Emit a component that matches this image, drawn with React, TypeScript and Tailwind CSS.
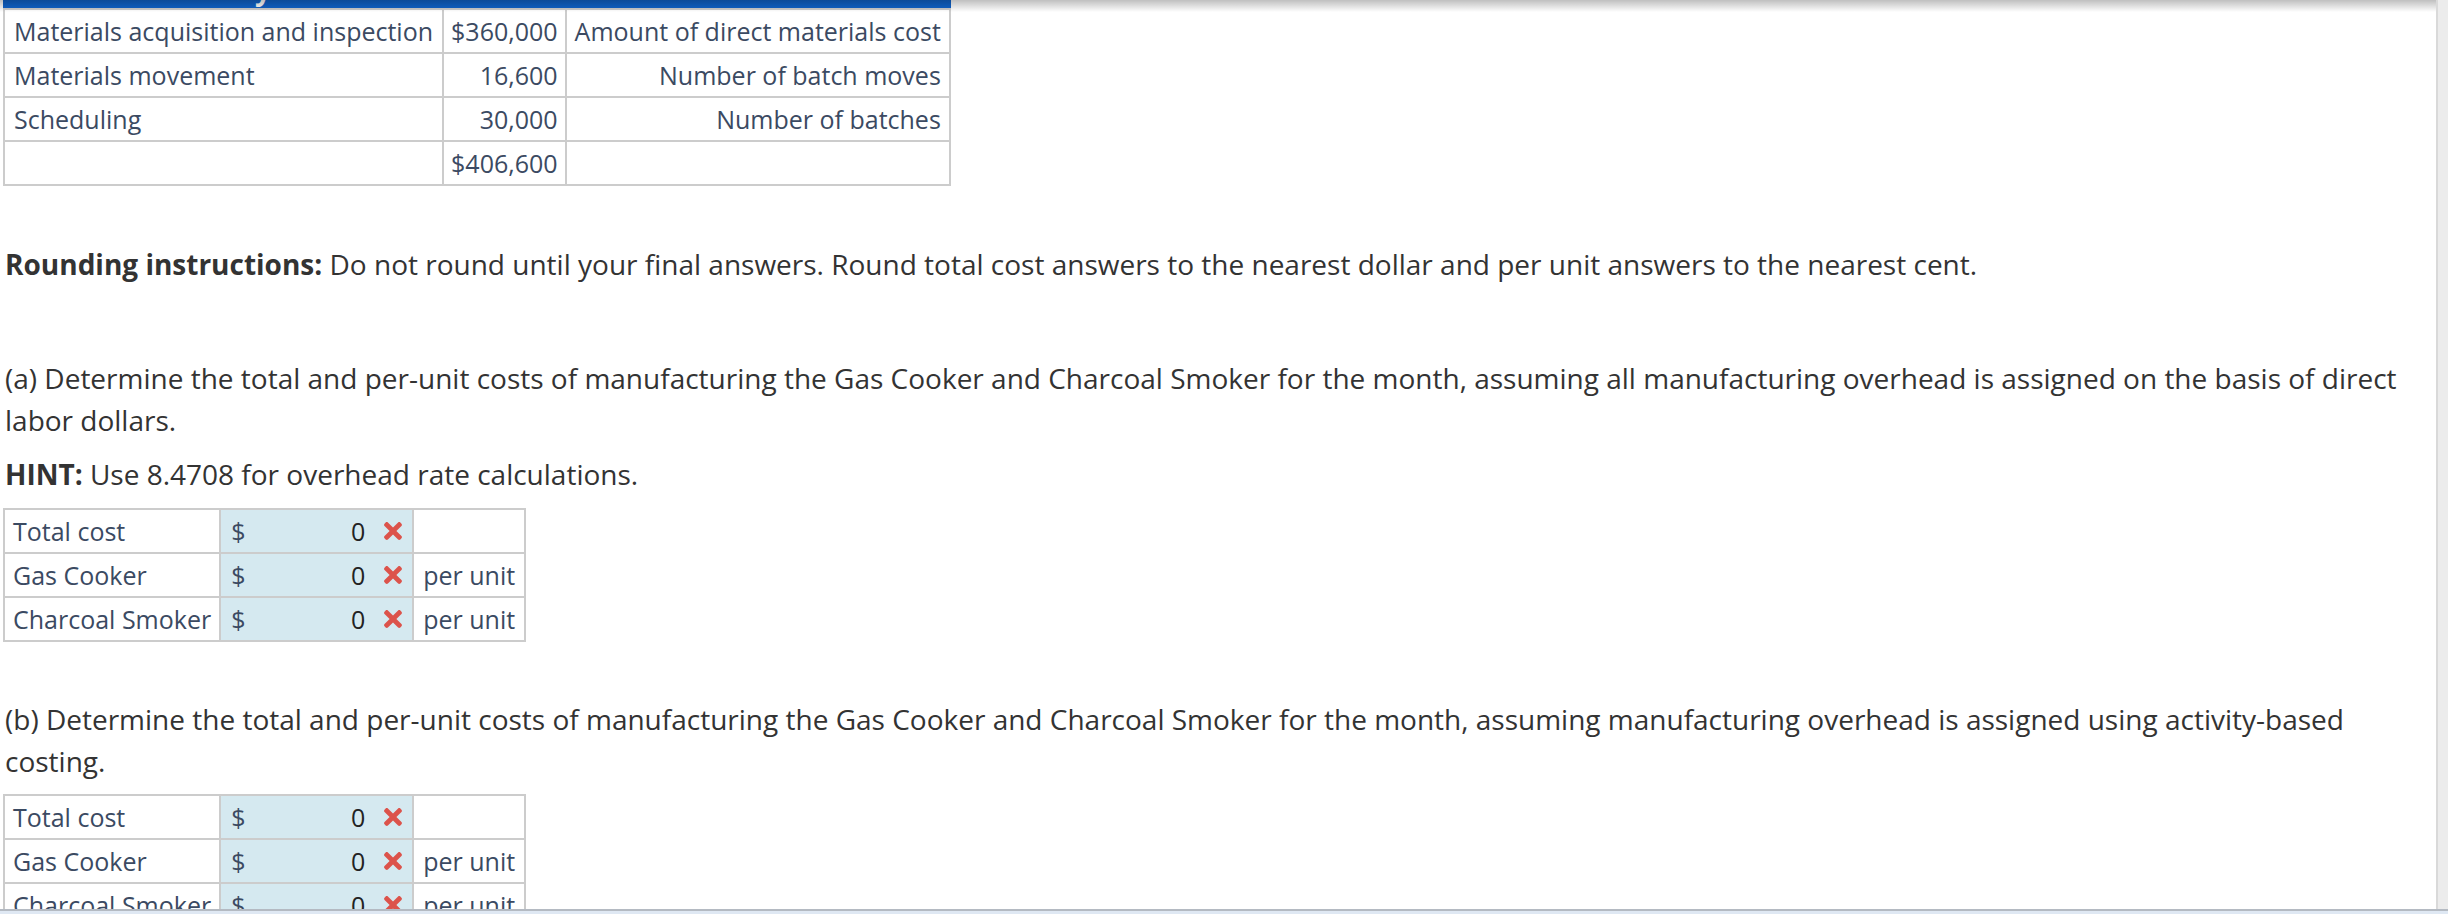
import { FaTimes } from 'react-icons/fa'

interface CostRow {
  label: string
  amount: string
  driver: string
}

const activityRows: CostRow[] = [
  { label: 'Materials acquisition and inspection', amount: '$360,000', driver: 'Amount of direct materials cost' },
  { label: 'Materials movement', amount: '16,600', driver: 'Number of batch moves' },
  { label: 'Scheduling', amount: '30,000', driver: 'Number of batches' },
  { label: '', amount: '$406,600', driver: '' },
]

const answerRows = [
  { label: 'Total cost', unit: '' },
  { label: 'Gas Cooker', unit: 'per unit' },
  { label: 'Charcoal Smoker', unit: 'per unit' },
]

const cell = 'border-2 border-[#cccccc] leading-[42px] whitespace-nowrap'

const AnswerTable = () => (
  <table className="border-collapse text-[25px] text-[#3b4a62]">
    <tbody>
      {answerRows.map((row) => (
        <tr key={row.label}>
          <td className={`${cell} px-[8px]`}>{row.label}</td>
          <td className="w-[193px] border-2 border-[#cccccc] bg-[#d5e9f0] pl-[10px] pr-[6px] leading-[42px]">
            <div className="flex items-center">
              <span>$</span>
              <span className="flex-1 text-right text-[#222222]">0</span>
              <FaTimes size={26} className="ml-[15px] shrink-0 text-[#dc534b]" />
            </div>
          </td>
          <td className={`${cell} w-[112px] px-[9px]`}>{row.unit}</td>
        </tr>
      ))}
    </tbody>
  </table>
)

export default function App() {
  return (
    <div
      className="relative flex h-[914px] w-full flex-col overflow-hidden bg-white"
      style={{ fontFamily: '"Open Sans", "Noto Sans", sans-serif' }}
    >
      <div className="flex min-h-0 flex-1">
        <main className="min-w-0 flex-1 pl-[3px]">
          {/* activity cost pool table, header scrolled out of view */}
          <div className="w-fit">
            <div className="relative h-[8px] overflow-hidden bg-[#0f63cb]">
              <span className="absolute left-[252px] top-[-25px] text-[28px] font-bold leading-none text-white">y</span>
            </div>
            <table className="border-collapse text-[25px] text-[#3b4a62]">
              <tbody>
                {activityRows.map((row, i) => (
                  <tr key={i}>
                    <td className={`${cell} px-[9px]`}>{row.label}</td>
                    <td className={`${cell} px-[7px] text-right`}>{row.amount}</td>
                    <td className={`${cell} px-[8px] text-right`}>{row.driver}</td>
                  </tr>
                ))}
              </tbody>
            </table>
          </div>

          <div className="pl-[2px] pr-[8px] text-[28px] leading-[42px] text-[#333333]">
            <p className="mt-[57px]">
              <span className="font-bold">Rounding instructions:</span> Do not round until your final answers. Round
              total cost answers to the nearest dollar and per unit answers to the nearest cent.
            </p>

            <p className="mt-[72px]">
              (a) Determine the total and per-unit costs of manufacturing the Gas Cooker and Charcoal Smoker for the
              month, assuming all manufacturing overhead is assigned on the basis of direct labor dollars.
            </p>
            <p className="mt-[12px]">
              <span className="font-bold">HINT:</span> Use 8.4708 for overhead rate calculations.
            </p>
          </div>

          <div className="mt-[13px]">
            <AnswerTable />
          </div>

          <div className="pl-[2px] pr-[8px] text-[28px] leading-[42px] text-[#333333]">
            <p className="mt-[56px]">
              (b) Determine the total and per-unit costs of manufacturing the Gas Cooker and Charcoal Smoker for the
              month, assuming manufacturing overhead is assigned using activity-based costing.
            </p>
          </div>

          <div className="mt-[12px]">
            <AnswerTable />
          </div>
        </main>
        <div className="w-[12px] shrink-0 border-l-2 border-[#d9d9d9] bg-[#ececec]" />
      </div>

      <div className="absolute bottom-0 left-0 right-0 h-[5px] border-t-2 border-[#b4bac2] bg-[#dfe8f3]" />
      <div className="pointer-events-none absolute left-0 right-[12px] top-0 h-[12px] bg-gradient-to-b from-black/25 to-transparent" />
    </div>
  )
}
